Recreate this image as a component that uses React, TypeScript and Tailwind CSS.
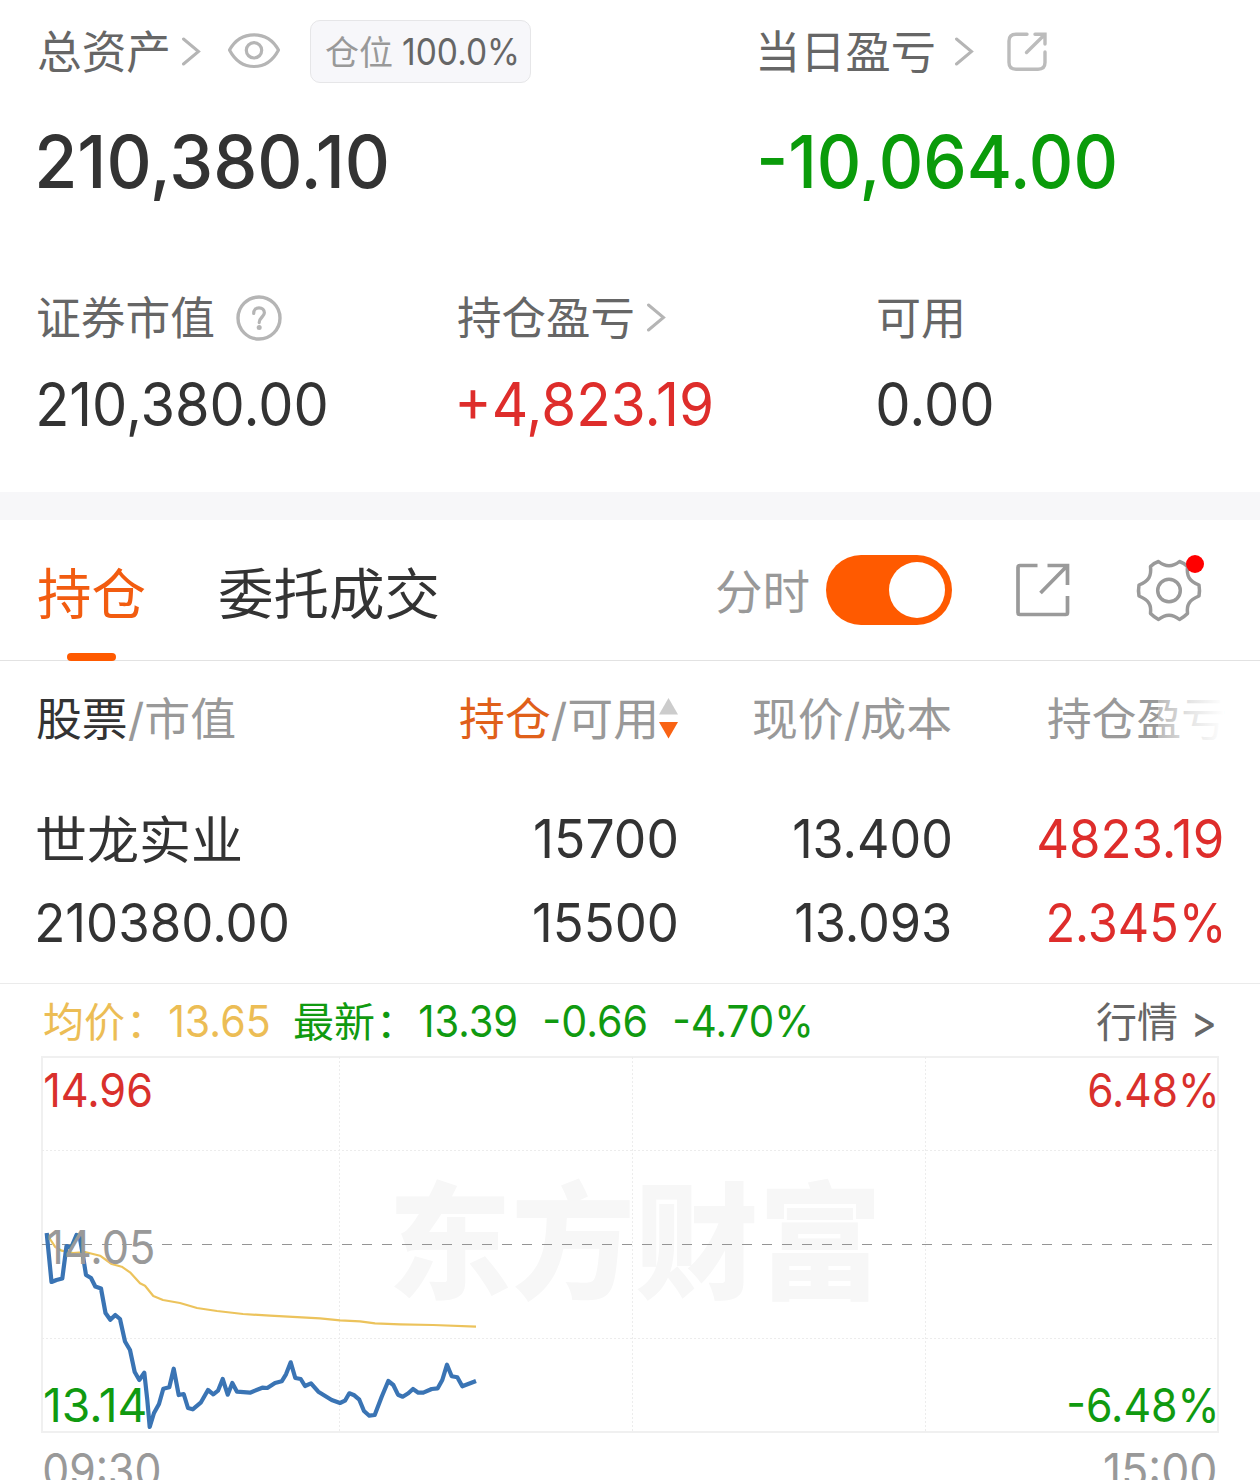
import { useLayoutEffect, useRef, type ReactNode } from "react";

const HAN = /[\u4e00-\u9fff]/;

/** A line of text whose visible glyphs span exactly the width of its box. */
function Ink({ className = "", children }: { className?: string; children: ReactNode }) {
  const box = useRef<HTMLSpanElement>(null);
  const inner = useRef<HTMLSpanElement>(null);
  useLayoutEffect(() => {
    const b = box.current;
    const i = inner.current;
    const ctx = document.createElement("canvas").getContext("2d");
    if (!b || !i || !ctx) return;
    const cs = getComputedStyle(i);
    const text = i.textContent ?? "";
    ctx.font = `${cs.fontWeight} ${cs.fontSize} ${cs.fontFamily}`;
    const m = ctx.measureText(text);
    const scale = b.clientWidth / (m.actualBoundingBoxLeft + m.actualBoundingBoxRight);
    // Han glyphs sit a little above the optical centre of the Latin line box.
    const drop = HAN.test(text) ? "0.03em" : "0px";
    i.style.transform = `translate(${m.actualBoundingBoxLeft * scale}px, ${drop}) scaleX(${scale})`;
  });
  return (
    <span ref={box} className={`block shrink-0 whitespace-nowrap ${className}`}>
      <span ref={inner} className="inline-block origin-left">
        {children}
      </span>
    </span>
  );
}

function Chevron({ className = "" }: { className?: string }) {
  return (
    <svg className={`h-[30px] w-[20px] shrink-0 ${className}`} viewBox="0 0 20 30" fill="none" stroke="#b5b5b5" strokeWidth="3" strokeLinecap="round">
      <path d="M2.5 2 L17.5 14.5 L2.5 27" />
    </svg>
  );
}

function Eye() {
  return (
    <svg className="ml-[26px] h-[38px] w-[54px] shrink-0" viewBox="0 0 54 38" fill="none" stroke="#b5b5b5" strokeWidth="3.2">
      <path d="M2.5 17 C8 7 16 1.8 27 1.8 C38 1.8 46 7 51.5 17 C46 27.5 38 33.5 27 33.5 C16 33.5 8 27.5 2.5 17 Z" strokeLinejoin="round" />
      <circle cx="27" cy="17.3" r="7.7" />
    </svg>
  );
}

function ShareRounded() {
  return (
    <svg className="ml-[33px] h-[40px] w-[40px] shrink-0" viewBox="0 0 40 40" fill="none" stroke="#bcbcbc" strokeWidth="3.4" strokeLinecap="round">
      <path d="M20 2.2 H9 Q2 2.2 2 9 V30.5 Q2 37.2 9 37.2 H31 Q38 37.2 38 30.5 V20" />
      <path d="M28 2.2 H38 V12 M37 3.2 L19.5 20.5" />
    </svg>
  );
}

function ShareSquare() {
  return (
    <svg className="ml-[64px] h-[54px] w-[54px] shrink-0" viewBox="0 0 54 54" fill="none" stroke="#9a9a9a" strokeWidth="3.7">
      <path d="M21.5 2.5 H4 Q2 2.5 2 4.5 V49.5 Q2 51.5 4 51.5 H49.5 Q51.5 51.5 51.5 49.5 V33" />
      <path d="M31.5 2.5 H51.5 V22 M50.5 3.5 L24.5 30" />
    </svg>
  );
}

function Gear() {
  return (
    <div className="relative ml-[66px] h-[66px] w-[66px] shrink-0">
      <svg className="h-full w-full" viewBox="1136 557 66 66" fill="none" stroke="#9a9a9a" strokeWidth="3.5" strokeLinejoin="round">
        <path d="M1158.5 561.5 Q1169 570 1179.5 561.5 Q1184 563 1187.5 566.5 C1186.5 576 1189 581 1199 585 Q1200 590.5 1199 596 C1189 600 1186.5 605 1187.5 613.5 Q1184 617 1179.5 619.5 Q1169 611 1158.5 619.5 Q1154 617 1150.5 613.5 C1151.5 605 1149 600 1139 596 Q1138 590.5 1139 585 C1149 581 1151.5 576 1150.5 566.5 Q1154 563 1158.5 561.5 Z" />
        <circle cx="1169" cy="590.5" r="11.3" />
      </svg>
      <span className="absolute -top-[2px] right-[-2px] size-[18px] rounded-full bg-[#ff0000]" />
    </div>
  );
}

function Question() {
  return (
    <svg className="ml-[22px] h-[46px] w-[46px] shrink-0" viewBox="0 0 46 46" fill="none" stroke="#b5b5b5" strokeWidth="3.4">
      <circle cx="23" cy="23" r="21" />
      <path d="M17.7 18.4 C17.7 14.8 19.8 12.8 23 12.8 C26.2 12.8 28.4 14.8 28.4 17.8 C28.4 21.8 23.2 22.4 23.2 27.6" strokeLinecap="round" strokeWidth="3.2" />
      <circle cx="23.2" cy="32.6" r="2.5" fill="#b5b5b5" stroke="none" />
    </svg>
  );
}

const price =
  "46.7,1233 51.5,1282 56.5,1280 62.3,1278.5 66.5,1246 71,1248 76.5,1235 79.5,1236 83,1256 86,1275 91,1278 95.3,1286.5 101,1288.5 105.5,1313 110.3,1319.8 115.3,1315 120,1319 125,1341.5 130,1350 134.7,1372 139.3,1380 144.3,1372.7 147.3,1400 149.7,1427 154,1413 159,1404 163.3,1388.7 169.3,1387.3 173.7,1368.7 178.7,1395 183.7,1394 188,1408 192.7,1409.3 200.7,1402.7 208,1390 213.3,1394.3 218,1390.7 222.7,1379 227.7,1394.7 232.3,1383 237,1391.7 250,1392.7 262.3,1387.7 267.3,1388 275,1383 281.7,1381.3 286,1374.3 290.7,1362.3 295.3,1378 300.7,1379 305,1386 311,1383.3 318.3,1391.7 331.7,1400 340,1403 345,1400.7 349.3,1393.3 354.3,1395.3 359.3,1399.7 364,1411 369.3,1415.7 374.7,1415 381.7,1396.7 388.3,1381 393.3,1385 398,1394.7 402.7,1396.7 408.3,1393.3 413,1389 418.3,1392.7 423.3,1392.7 431.7,1389 437.7,1388.3 442.3,1380 447,1364.7 451.7,1376.3 457.3,1377.3 462.3,1386.3 476,1381";

const average =
  "48,1234 50,1239 55,1246.7 61.7,1250.7 73,1253 85,1252 100,1255.7 111.7,1264 121.7,1266.7 130,1272.3 140,1283.3 145,1285.7 153.3,1296 163,1300 180,1303 197,1308 217,1311 243,1314 270,1315.7 320,1318.3 340,1320.3 360,1321.3 375,1323.3 400,1324.3 433,1325 476,1326.7";

function Chart() {
  return (
    <div className="relative ml-[41px] h-[377px] w-[1178px] text-[47px] leading-[48px]">
      <div className="absolute top-[103px] left-[353px] text-[126px] leading-[160px] font-black text-[#f7f7f7]">
        <Ink className="w-[480px]">东方财富</Ink>
      </div>
      <svg className="absolute inset-0 h-full w-full" viewBox="41 1056 1178 377" fill="none">
        <rect x="42" y="1057" width="1176" height="375" stroke="#f0f0f0" strokeWidth="2" />
        <path d="M339.5 1057 V1432 M632.5 1057 V1432 M925.5 1057 V1432 M42 1150.5 H1218 M42 1338.5 H1218" stroke="#ececec" strokeDasharray="2 2" />
        <path d="M42 1244.5 H1218" stroke="#959595" strokeWidth="1.2" strokeDasharray="10 10" />
        <polyline points={average} stroke="#ecc35c" strokeWidth="2.2" strokeLinejoin="round" />
        <polyline points={price} stroke="#3a74b4" strokeWidth="4.2" strokeLinejoin="round" />
      </svg>
      <Ink className="absolute top-[10px] left-[4px] w-[106px] text-[#d9302c]">14.96</Ink>
      <Ink className="absolute top-[10px] right-[4px] w-[126px] text-[#d9302c]">6.48%</Ink>
      <Ink className="absolute top-[167px] left-[7px] w-[105px] text-[#999999]">14.05</Ink>
      <Ink className="absolute top-[325px] left-[4px] w-[100px] text-[#109a10]">13.14</Ink>
      <Ink className="absolute top-[325px] right-[4px] w-[146px] text-[#109a10]">-6.48%</Ink>
    </div>
  );
}

export default function App() {
  return (
    <div className="h-[1480px] w-[1260px] overflow-hidden bg-white font-['Inter','Noto_Sans_CJK_SC',sans-serif] text-[#333333]">
      <section className="h-[492px] pt-5 pl-[38px]">
        <div className="grid grid-cols-[722px_1fr] text-[45px] leading-[62px] text-[#666666]">
          <div className="flex h-[63px] items-center">
            <Ink className="w-[130px]">总资产</Ink>
            <Chevron className="ml-[13px]" />
            <Eye />
            <div className="ml-[29px] flex h-[63px] w-[221px] items-center rounded-[10px] border border-[#e6e6e8] bg-[#f7f7fa] pl-[15px] text-[34px]">
              <Ink className="w-[66px] text-[#999999]">仓位</Ink>
              <Ink className="ml-[11px] w-[114px] text-[37px]">100.0%</Ink>
            </div>
          </div>
          <div className="flex h-[63px] items-center">
            <Ink className="w-[174px]">当日盈亏</Ink>
            <Chevron className="ml-[20px]" />
            <ShareRounded />
          </div>
        </div>
        <div className="mt-[38px] grid grid-cols-[722px_1fr] text-[73px] leading-[81px] font-medium">
          <Ink className="ml-px w-[348px]">210,380.10</Ink>
          <Ink className="ml-px w-[354px] text-[#0a9b0a]">-10,064.00</Ink>
        </div>
        <div className="mt-[93px] grid grid-cols-[420px_420px_1fr] text-[45px] leading-[46px] text-[#666666]">
          <div className="flex h-[46px] items-center">
            <Ink className="w-[176px]">证券市值</Ink>
            <Question />
          </div>
          <div className="flex h-[46px] items-center">
            <Ink className="w-[175px]">持仓盈亏</Ink>
            <Chevron className="ml-[13px]" />
          </div>
          <Ink className="w-[83px]">可用</Ink>
        </div>
        <div className="mt-[31px] grid grid-cols-[421px_419px_1fr] text-[60px] leading-[64px]">
          <Ink className="ml-px w-[287px]">210,380.00</Ink>
          <Ink className="w-[252px] text-[#de2d2b]">+4,823.19</Ink>
          <Ink className="w-[114px]">0.00</Ink>
        </div>
      </section>

      <div className="h-[28px] bg-[#f7f7f9]" />

      <nav className="flex h-[141px] items-start border-b border-[#e2e2e2] pl-[38px] text-[55px] leading-[145px]">
        <div className="relative text-[#f25c10]">
          <Ink className="w-[107px]">持仓</Ink>
          <span className="absolute top-[133px] left-[29px] h-[7.5px] w-[49px] rounded-full bg-[#ff5a00]" />
        </div>
        <Ink className="ml-[74px] w-[219px]">委托成交</Ink>
        <div className="ml-auto flex h-[140px] items-center pr-[58px]">
          <Ink className="w-[92px] text-[47px] text-[#999999]">分时</Ink>
          <div className="ml-[17px] flex h-[70px] w-[126px] shrink-0 items-center justify-end rounded-full bg-[#ff5a00] pr-[7px]">
            <span className="size-[56px] rounded-full bg-white" />
          </div>
          <ShareSquare />
          <Gear />
        </div>
      </nav>

      <section className="h-[323px] border-b border-[#ebebeb] pl-[37px]">
        <div className="flex h-[114px] text-[45px] leading-[116px] text-[#999999]">
          <Ink className="w-[198px]">
            <span className="text-[#333333]">股票</span>/市值
          </Ink>
          <Ink className="ml-[225px] w-[194px]">
            <span className="text-[#e0601a]">持仓</span>/可用
          </Ink>
          <svg className="mt-[36px] ml-[4px] h-[42px] w-[20px] shrink-0" viewBox="0 0 20 42">
            <path d="M10.5 1 L20 17.5 H1 Z" fill="#cccccc" />
            <path d="M10.5 41.5 L20 25 H1 Z" fill="#f96314" />
          </svg>
          <Ink className="ml-[75px] w-[198px]">现价/成本</Ink>
          <div className="relative ml-[97px]">
            <Ink className="w-[176px]">持仓盈亏</Ink>
            <span className="absolute inset-y-0 right-0 w-[66px] bg-gradient-to-r from-white/30 via-white/75 to-white" />
          </div>
        </div>
        <div className="mt-[22px] flex text-[54px] leading-[84px]">
          <Ink className="w-[204px] text-[51px]">世龙实业</Ink>
          <Ink className="ml-[294px] w-[141px]">15700</Ink>
          <Ink className="ml-[118px] w-[156px]">13.400</Ink>
          <Ink className="ml-[89px] w-[183px] text-[#de2d2b]">4823.19</Ink>
        </div>
        <div className="flex text-[54px] leading-[84px]">
          <Ink className="ml-px w-[249px]">210380.00</Ink>
          <Ink className="ml-[247px] w-[142px]">15500</Ink>
          <Ink className="ml-[120px] w-[154px]">13.093</Ink>
          <Ink className="ml-[99px] w-[172px] text-[#de2d2b]">2.345%</Ink>
        </div>
      </section>

      <section>
        <div className="flex h-[72px] pl-[44px] text-[44px] leading-[75px]">
          <div className="flex w-[250px] text-[#ecbd55]">
            <Ink className="w-[80px] text-[41px]">均价</Ink>
            <span className="ml-[2px] w-[43px] shrink-0 pt-[2px] text-[41px]">：</span>
            <Ink className="ml-px w-[99px]">13.65</Ink>
          </div>
          <div className="flex text-[#109a10]">
            <Ink className="w-[80px] text-[41px]">最新</Ink>
            <span className="ml-[2px] w-[43px] shrink-0 pt-[2px] text-[41px]">：</span>
            <Ink className="ml-px w-[96px]">13.39</Ink>
            <Ink className="ml-[29px] w-[101px]">-0.66</Ink>
            <Ink className="ml-[29px] w-[135px]">-4.70%</Ink>
          </div>
          <div className="ml-auto flex pr-[46px] text-[#666666]">
            <Ink className="w-[80px] text-[41px]">行情</Ink>
            <Ink className="ml-[18px] w-[19px] text-[46px]">&gt;</Ink>
          </div>
        </div>
        <Chart />
        <div className="flex justify-between pt-[13px] pr-[45px] pl-[44px] text-[47px] leading-[48px] text-[#999999]">
          <Ink className="w-[115px]">09:30</Ink>
          <Ink className="w-[110px]">15:00</Ink>
        </div>
      </section>
    </div>
  );
}
